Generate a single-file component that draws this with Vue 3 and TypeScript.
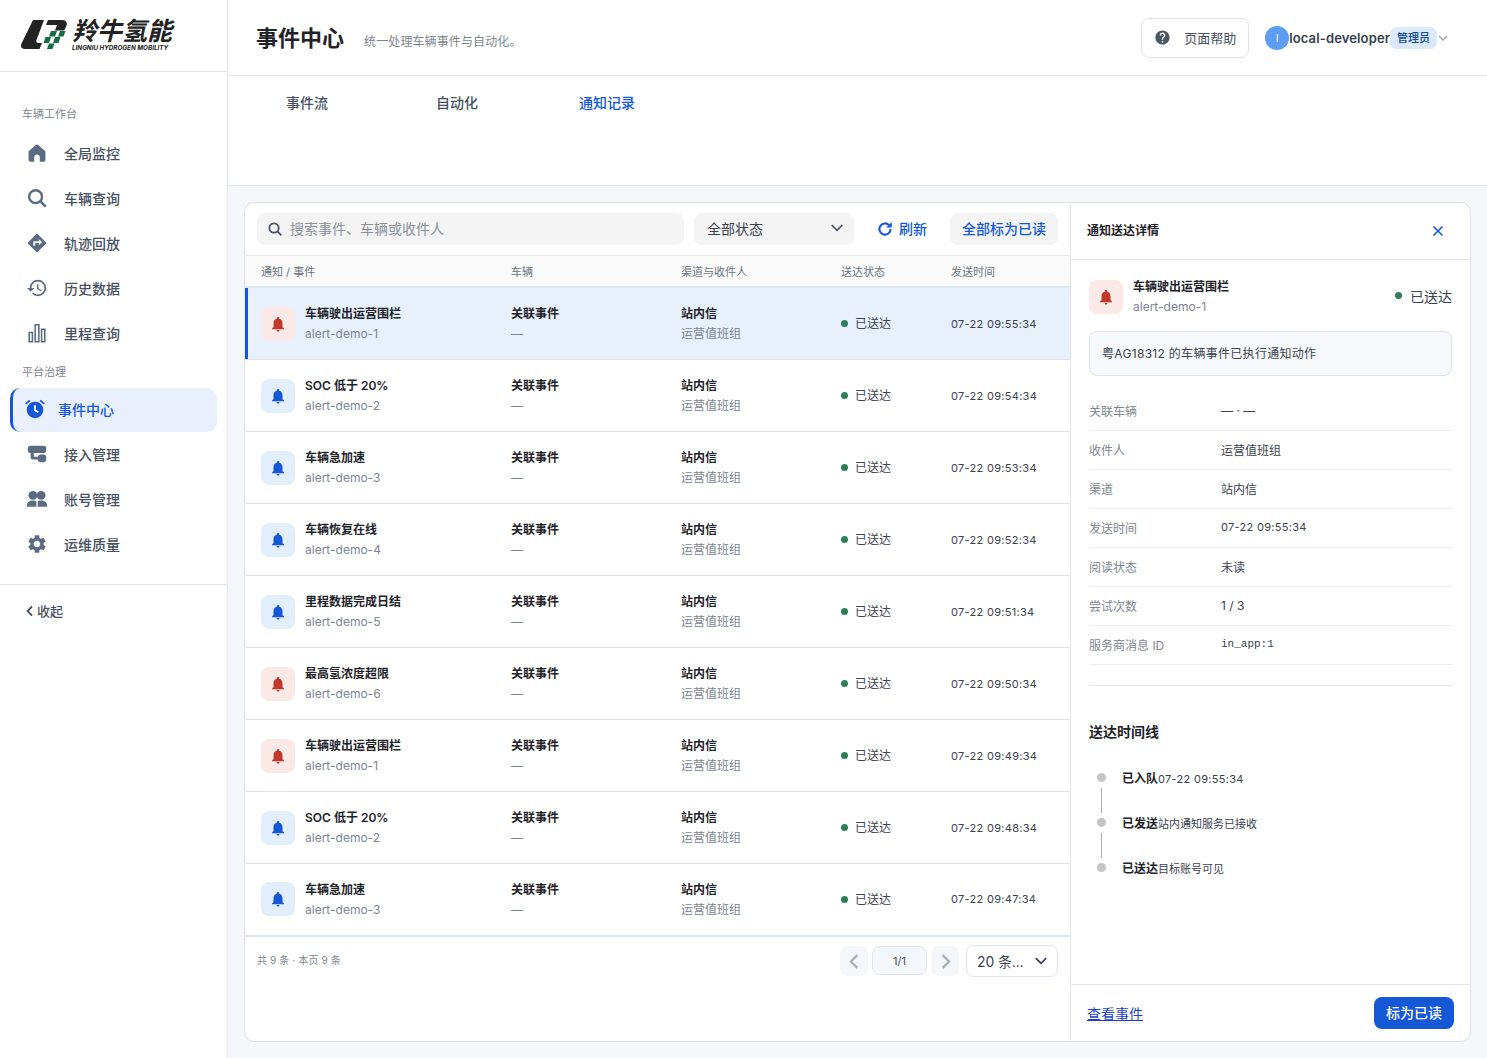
<template>
  <div class="app">
    <aside class="sidebar">
      <div class="logo">
        <svg class="logo-mark" viewBox="0 0 46 31">
          <path d="M12 1h11L15.500 21q-1 3 2 3H21l-2.500 6H4Q-1.500 30 .5 24.500Z" fill="#232323" />
          <path d="M27 1h14q6 0 4.500 5.500L44 10q-.5 1.500-2 1.500h-8l2-5.500h-11Z" fill="#232323" />
          <path d="M30 12h6l-2 5.500h-6ZM39 12h5.500l-2 5.500H37ZM24.500 18H30l-2 6h-5.500ZM34 18h5.500l-2 6H32ZM28 24.500h5.500L31.500 30H26Z" fill="#146c43" />
        </svg>
        <div class="logo-text">
          <div class="logo-cn">羚牛氢能</div>
          <div class="logo-en">LINGNIU HYDROGEN MOBILITY</div>
        </div>
      </div>
      <nav class="nav">
        <div class="nav-label">车辆工作台</div>
        <a v-for="item in workItems" :key="item.label" class="nav-item">
          <svg class="nav-icon" viewBox="0 0 24 24" v-html="item.icon"></svg>
          <span>{{ item.label }}</span>
        </a>
        <div class="nav-label second">平台治理</div>
        <a class="nav-item active">
          <svg class="nav-icon" viewBox="0 0 24 24">
            <path d="M2.500 7.200 7 3.400 5.700 1.900 1.200 5.700ZM22.800 5.700l-4.500-3.800L17 3.400l4.500 3.800Z" fill="#1558d6" />
            <circle cx="12" cy="13" r="9" fill="#1558d6" />
            <path d="M12 8v5.400l3.600 2.100" fill="none" stroke="#fff" stroke-width="2" />
          </svg>
          <span>事件中心</span>
        </a>
        <a v-for="item in adminItems" :key="item.label" class="nav-item">
          <svg class="nav-icon" viewBox="0 0 24 24" v-html="item.icon"></svg>
          <span>{{ item.label }}</span>
        </a>
      </nav>
      <div class="collapse">
        <svg viewBox="0 0 12 12" class="collapse-icon"><path d="M8 1.500 3.500 6 8 10.500" fill="none" stroke="currentColor" stroke-width="1.800" /></svg>
        <span>收起</span>
      </div>
    </aside>

    <div class="main">
      <header class="topbar">
        <h1>事件中心</h1>
        <p>统一处理车辆事件与自动化。</p>
        <button class="help">
          <svg viewBox="0 0 24 24" class="help-icon"><path d="M12 2C6.480 2 2 6.480 2 12s4.480 10 10 10 10-4.480 10-10S17.520 2 12 2zm1 17h-2v-2h2v2zm2.070-7.750-.9.920C13.450 12.900 13 13.500 13 15h-2v-.5c0-1.100.45-2.100 1.170-2.830l1.240-1.260c.37-.36.59-.86.59-1.410 0-1.100-.9-2-2-2s-2 .9-2 2H8c0-2.210 1.790-4 4-4s4 1.790 4 4c0 .88-.36 1.680-.93 2.250z" fill="#4b5563" /></svg>
          页面帮助
        </button>
        <div class="user">
          <span class="avatar">l</span>
          <span class="user-name">local-developer</span>
          <span class="role">管理员</span>
          <svg viewBox="0 0 12 12" class="user-chevron"><path d="M2 4l4 4 4-4" fill="none" stroke="#9aa3af" stroke-width="1.300" /></svg>
        </div>
      </header>

      <div class="tabs">
        <span v-for="tab in tabs" :key="tab" class="tab" :class="{ current: tab === '通知记录' }">{{ tab }}</span>
      </div>

      <main class="content">
        <section class="card">
          <div class="list">
            <div class="toolbar">
              <div class="search">
                <svg viewBox="0 0 24 24" class="search-icon"><circle cx="10.500" cy="10.500" r="7" fill="none" stroke="#4b5563" stroke-width="2.800" /><path d="m16 16 5.500 5.500" stroke="#4b5563" stroke-width="2.800" /></svg>
                <span>搜索事件、车辆或收件人</span>
              </div>
              <div class="status-select">
                <span>全部状态</span>
                <svg viewBox="0 0 12 12" class="chevron"><path d="M1.500 3.500 6 8l4.500-4.500" fill="none" stroke="#4b5563" stroke-width="1.500" /></svg>
              </div>
              <button class="refresh">
                <svg viewBox="0 0 24 24" class="refresh-icon"><path d="M19.500 12a7.500 7.500 0 1 1-2.200-5.300" fill="none" stroke="#1558d6" stroke-width="2.800" /><path d="M21 2.500v7.500h-7.500Z" fill="#1558d6" /></svg>
                刷新
              </button>
              <button class="read-all">全部标为已读</button>
            </div>

            <div class="row head">
              <span>通知 / 事件</span>
              <span>车辆</span>
              <span>渠道与收件人</span>
              <span>送达状态</span>
              <span>发送时间</span>
            </div>

            <div
              v-for="(row, i) in rows"
              :key="i"
              class="row body-row"
              :class="{ selected: i === 0 }"
            >
              <div class="event-cell">
                <span class="bell-box" :class="row.level">
                  <svg viewBox="0 0 24 24" class="bell"><path :d="bellPath" /></svg>
                </span>
                <div class="stack">
                  <strong>{{ row.title }}</strong>
                  <small>{{ row.id }}</small>
                </div>
              </div>
              <div class="stack">
                <strong>关联事件</strong>
                <small>—</small>
              </div>
              <div class="stack">
                <strong>站内信</strong>
                <small>运营值班组</small>
              </div>
              <div class="status"><i class="dot"></i>已送达</div>
              <div class="time">{{ row.time }}</div>
            </div>

            <div class="pager">
              <span class="total">共 9 条 · 本页 9 条</span>
              <div class="pager-right">
                <button class="page-btn">
                  <svg viewBox="0 0 12 12"><path d="M8 1.500 3.500 6 8 10.500" fill="none" stroke="#a3abb8" stroke-width="1.500" /></svg>
                </button>
                <span class="page-no">1/1</span>
                <button class="page-btn">
                  <svg viewBox="0 0 12 12"><path d="M4 1.500 8.500 6 4 10.500" fill="none" stroke="#a3abb8" stroke-width="1.500" /></svg>
                </button>
                <div class="size-select">
                  <span>20 条...</span>
                  <svg viewBox="0 0 12 12" class="chevron"><path d="M1.500 3.500 6 8l4.500-4.500" fill="none" stroke="#374151" stroke-width="1.500" /></svg>
                </div>
              </div>
            </div>
          </div>

          <aside class="detail">
            <div class="detail-head">
              <h2>通知送达详情</h2>
              <svg viewBox="0 0 12 12" class="close"><path d="M1.500 1.500l9 9m0-9-9 9" stroke="#1558d6" stroke-width="1.600" /></svg>
            </div>
            <div class="detail-body">
              <div class="summary">
                <span class="bell-box danger">
                  <svg viewBox="0 0 24 24" class="bell"><path :d="bellPath" /></svg>
                </span>
                <div class="stack">
                  <strong>车辆驶出运营围栏</strong>
                  <small>alert-demo-1</small>
                </div>
                <div class="summary-status"><i class="dot"></i>已送达</div>
              </div>
              <div class="message">粤AG18312 的车辆事件已执行通知动作</div>
              <dl class="facts">
                <div v-for="fact in facts" :key="fact.label" class="fact">
                  <dt>{{ fact.label }}</dt>
                  <dd :class="fact.cls">{{ fact.value }}</dd>
                </div>
              </dl>
              <h3>送达时间线</h3>
              <ul class="timeline">
                <li v-for="step in steps" :key="step.name">
                  <i></i>
                  <b>{{ step.name }}</b><span :class="{ num: step.num }">{{ step.note }}</span>
                </li>
              </ul>
            </div>
            <div class="detail-foot">
              <a class="view-link">查看事件</a>
              <button class="mark-read">标为已读</button>
            </div>
          </aside>
        </section>
      </main>
    </div>
  </div>
</template>

<script setup lang="ts">
const bellPath = 'M12 22c1.100 0 2-.9 2-2h-4c0 1.100.9 2 2 2zm6-6v-5c0-3.070-1.630-5.640-4.500-6.320V4c0-.83-.67-1.500-1.500-1.500s-1.500.67-1.500 1.500v.68C7.640 5.360 6 7.920 6 11v5l-2 2v1h16v-1l-2-2z'

const workItems = [
  {
    label: '全局监控',
    icon: '<path d="M10.700 3.200a2 2 0 0 1 2.600 0l7.200 6.300a2 2 0 0 1 .7 1.500V19.500a2 2 0 0 1-2 2H15v-5a3 3 0 0 0-6 0v5H4.800a2 2 0 0 1-2-2V11a2 2 0 0 1 .7-1.500Z"/>',
  },
  {
    label: '车辆查询',
    icon: '<circle cx="10.500" cy="10.500" r="7" fill="none" stroke="currentColor" stroke-width="2.600"/><path d="m16 16 5.500 5.500" stroke="currentColor" stroke-width="2.800"/>',
  },
  {
    label: '轨迹回放',
    icon: '<path d="M21.710 11.290l-9-9a.996.996 0 0 0-1.410 0l-9 9a.996.996 0 0 0 0 1.410l9 9c.39.39 1.020.39 1.410 0l9-9a.996.996 0 0 0 0-1.410zM14 14.500V12h-4v3H8v-4c0-.55.45-1 1-1h5V7.500l3.500 3.500-3.500 3.500z"/>',
  },
  {
    label: '历史数据',
    icon: '<path d="M13 3a9 9 0 0 0-9 9H1l3.890 3.890.07.14L9 12H6c0-3.870 3.130-7 7-7s7 3.130 7 7-3.130 7-7 7c-1.930 0-3.680-.79-4.940-2.060l-1.420 1.420A8.954 8.954 0 0 0 13 21a9 9 0 0 0 0-18zm-1 5v5l4.280 2.540.72-1.210-3.500-2.080V8H12z"/>',
  },
  {
    label: '里程查询',
    icon: '<path d="M3.500 11.500h3.500v10H3.500ZM10 3h4v18.500h-4ZM17 8h3.500v13.500H17Z" fill="none" stroke="currentColor" stroke-width="1.700"/>',
  },
]

const adminItems = [
  {
    label: '接入管理',
    icon: '<rect x="2" y="3" width="20" height="8" rx="2.500"/><path d="M5 10h3.500v5H15v3H7.500A2.500 2.500 0 0 1 5 15.500Z"/><rect x="13" y="12.500" width="9" height="8.500" rx="3"/>',
  },
  {
    label: '账号管理',
    icon: '<circle cx="7.500" cy="8" r="4.800"/><circle cx="16.500" cy="8" r="4.800"/><path d="M1 20.500v-2c0-3 3-5 6.500-5 1.500 0 2.800.4 3.800 1v6ZM12.700 20.500v-6c1-.6 2.300-1 3.800-1 3.500 0 6.500 2 6.500 5v2Z"/>',
  },
  {
    label: '运维质量',
    icon: '<path d="M19.140 12.940c.04-.3.06-.61.06-.94 0-.32-.02-.64-.07-.94l2.030-1.580a.49.49 0 0 0 .12-.61l-1.920-3.320a.488.488 0 0 0-.59-.22l-2.390.96c-.5-.38-1.030-.7-1.620-.94l-.36-2.540a.484.484 0 0 0-.48-.4h-3.840c-.24 0-.43.17-.47.41l-.36 2.540c-.59.24-1.130.57-1.620.94l-2.390-.96c-.22-.08-.47 0-.59.22L2.740 8.870c-.12.21-.08.47.12.61l2.030 1.580c-.05.3-.09.63-.09.94s.02.64.07.94l-2.030 1.580a.49.49 0 0 0-.12.61l1.920 3.320c.12.22.37.29.59.22l2.390-.96c.5.38 1.030.7 1.620.94l.36 2.540c.05.24.24.41.48.41h3.840c.24 0 .44-.17.47-.41l.36-2.540c.59-.24 1.130-.56 1.620-.94l2.390.96c.22.08.47 0 .59-.22l1.920-3.320c.12-.22.07-.47-.12-.61l-2.010-1.580zM12 15.600c-1.980 0-3.600-1.620-3.600-3.600s1.620-3.600 3.600-3.600 3.600 1.620 3.600 3.600-1.620 3.600-3.600 3.600z"/>',
  },
]

const tabs = ['事件流', '自动化', '通知记录']

const rows = [
  { title: '车辆驶出运营围栏', id: 'alert-demo-1', time: '07-22 09:55:34', level: 'danger' },
  { title: 'SOC 低于 20%', id: 'alert-demo-2', time: '07-22 09:54:34', level: 'info' },
  { title: '车辆急加速', id: 'alert-demo-3', time: '07-22 09:53:34', level: 'info' },
  { title: '车辆恢复在线', id: 'alert-demo-4', time: '07-22 09:52:34', level: 'info' },
  { title: '里程数据完成日结', id: 'alert-demo-5', time: '07-22 09:51:34', level: 'info' },
  { title: '最高氢浓度超限', id: 'alert-demo-6', time: '07-22 09:50:34', level: 'danger' },
  { title: '车辆驶出运营围栏', id: 'alert-demo-1', time: '07-22 09:49:34', level: 'danger' },
  { title: 'SOC 低于 20%', id: 'alert-demo-2', time: '07-22 09:48:34', level: 'info' },
  { title: '车辆急加速', id: 'alert-demo-3', time: '07-22 09:47:34', level: 'info' },
]

const facts = [
  { label: '关联车辆', value: '— · —', cls: '' },
  { label: '收件人', value: '运营值班组', cls: '' },
  { label: '渠道', value: '站内信', cls: '' },
  { label: '发送时间', value: '07-22 09:55:34', cls: 'num' },
  { label: '阅读状态', value: '未读', cls: '' },
  { label: '尝试次数', value: '1 / 3', cls: '' },
  { label: '服务商消息 ID', value: 'in_app:1', cls: 'mono' },
]

const steps = [
  { name: '已入队', note: '07-22 09:55:34', num: true },
  { name: '已发送', note: '站内通知服务已接收', num: false },
  { name: '已送达', note: '目标账号可见', num: false },
]
</script>

<style>
html,
body {
  background: #f5f7fb;
}
</style>

<style scoped>
.app {
  display: flex;
  height: 1058px;
  overflow: hidden;
  font-family: Inter, "Noto Sans CJK SC", sans-serif;
  color: #1f2329;
}

.sidebar {
  width: 228px;
  flex: none;
  box-sizing: border-box;
  background: #fff;
  border-right: 1px solid #e3e6ea;
}

.logo {
  height: 72px;
  box-sizing: border-box;
  border-bottom: 1px solid #e3e6ea;
  display: flex;
  align-items: center;
  padding: 0 0 2px 21px;
  gap: 5px;
}

.logo-mark {
  width: 46px;
  height: 31px;
}

.logo-cn {
  font-size: 25px;
  line-height: 26px;
  font-weight: 700;
  font-style: italic;
  color: #222;
  white-space: nowrap;
}

.logo-en {
  font-size: 6.300px;
  line-height: 8px;
  font-weight: 700;
  font-style: italic;
  color: #222;
  white-space: nowrap;
}

.nav {
  padding: 34px 10px 0;
  height: 513px;
  box-sizing: border-box;
  border-bottom: 1px solid #e3e6ea;
}

.nav-label {
  font-size: 11px;
  line-height: 16px;
  color: #7d8590;
  padding-left: 12px;
  margin-bottom: 8px;
}

.nav-label.second {
  margin: 0 0 8px;
  padding-top: 9px;
}

.nav-item {
  display: flex;
  align-items: center;
  height: 45px;
  padding-left: 16px;
  gap: 16px;
  font-size: 14px;
  font-weight: 500;
  color: #48505e;
}

.nav-icon {
  width: 22px;
  height: 22px;
  fill: #5d6b82;
  color: #5d6b82;
  flex: none;
}

.nav-item.active {
  height: 44px;
  margin-bottom: -1px;
  padding: 0 0 2px 11px;
  gap: 12px;
  color: #1558d6;
  background: #e9f0fb;
  border-left: 3px solid #1558d6;
  border-radius: 10px;
  box-sizing: border-box;
  width: 207px;
}

.collapse {
  display: flex;
  align-items: center;
  gap: 1px;
  padding: 17px 0 0 24px;
  font-size: 13px;
  font-weight: 500;
  color: #48505e;
  line-height: 18px;
}

.collapse-icon {
  width: 12px;
  height: 12px;
}

.main {
  flex: 1;
  min-width: 0;
  display: flex;
  flex-direction: column;
}

.topbar {
  height: 76px;
  box-sizing: border-box;
  background: #fff;
  border-bottom: 1px solid #e3e6ea;
  display: flex;
  align-items: center;
  padding: 0 38px 0 28px;
}

.topbar h1 {
  margin: 0 20px 4px 0;
  font-size: 22px;
  font-weight: 600;
  color: #1f2329;
}

.topbar p {
  margin: 6px 0 0;
  font-size: 12px;
  letter-spacing: .01em;
  color: #7d8590;
}

.help {
  margin-left: auto;
  width: 108px;
  height: 40px;
  box-sizing: border-box;
  display: flex;
  align-items: center;
  gap: 13px;
  padding: 0 12px;
  background: #fff;
  border: 1px solid #e0e3e7;
  border-radius: 8px;
  font: inherit;
  font-size: 13px;
  color: #48505e;
  white-space: nowrap;
}

.help-icon {
  width: 17px;
  height: 17px;
  flex: none;
}

.user {
  display: flex;
  align-items: center;
  margin-left: 16px;
}

.avatar {
  width: 24px;
  height: 24px;
  border-radius: 50%;
  background: #5b9ef4;
  color: #fff;
  font-size: 10px;
  display: flex;
  align-items: center;
  justify-content: center;
}

.user-name {
  font-size: 13px;
  font-weight: 600;
  letter-spacing: .01em;
  color: #36404f;
}

.role {
  width: 47px;
  height: 22px;
  box-sizing: border-box;
  text-align: center;
  line-height: 22px;
  font-size: 11px;
  font-weight: 500;
  color: #0f4a99;
  background: #dce9fb;
  border-radius: 7px;
}

.user-chevron {
  width: 12px;
  height: 12px;
}

.tabs {
  height: 110px;
  box-sizing: border-box;
  background: #fff;
  border-bottom: 1px solid #e3e6ea;
  padding: 17px 0 0 4px;
  display: flex;
  align-items: flex-start;
}

.tab {
  width: 150px;
  text-align: center;
  font-size: 14px;
  font-weight: 500;
  line-height: 20px;
  color: #48505e;
}

.tab.current {
  color: #1558d6;
}

.content {
  flex: 1;
  padding: 16px;
  min-height: 0;
  background: #f5f7fb;
}

.card {
  height: 100%;
  box-sizing: border-box;
  display: grid;
  grid-template-columns: 826px 1fr;
  background: #fff;
  border: 1px solid #dde2e9;
  border-radius: 10px;
  overflow: hidden;
}

.list {
  border-right: 1px solid #e3e6ea;
  display: flex;
  flex-direction: column;
}

.toolbar {
  height: 53px;
  flex: none;
  box-sizing: border-box;
  display: flex;
  align-items: center;
  padding: 0 12px;
  border-bottom: 1px solid #e6e8ec;
}

.search {
  width: 427px;
  height: 32px;
  box-sizing: border-box;
  background: #f4f4f5;
  border-radius: 8px;
  display: flex;
  align-items: center;
  gap: 7px;
  padding: 0 0 2px 10px;
  font-size: 14px;
  color: #8a8f98;
}

.search-icon {
  width: 16px;
  height: 16px;
  margin-top: 2px;
}

.status-select {
  width: 160px;
  height: 32px;
  margin-left: 10px;
  box-sizing: border-box;
  background: #f4f4f5;
  border-radius: 8px;
  display: flex;
  align-items: center;
  justify-content: space-between;
  padding: 0 10px 2px 13px;
  font-size: 14px;
  color: #3b424e;
}

.chevron {
  width: 14px;
  height: 14px;
}

.refresh {
  margin-left: 22px;
  border: 0;
  background: none;
  padding: 0 0 2px;
  display: flex;
  align-items: center;
  gap: 5px;
  font: inherit;
  font-size: 14px;
  font-weight: 500;
  color: #1558d6;
}

.refresh-icon {
  width: 18px;
  height: 18px;
  margin-top: 2px;
}

.read-all {
  margin-left: 23px;
  width: 108px;
  height: 32px;
  border: 0;
  border-radius: 8px;
  background: #f4f4f5;
  font: inherit;
  font-size: 14px;
  font-weight: 500;
  color: #1558d6;
  padding: 0 0 2px;
}

.row {
  display: grid;
  grid-template-columns: 250px 170px 160px 110px 1fr;
  padding: 0 0 0 16px;
  align-items: center;
  box-sizing: border-box;
}

.head {
  height: 32px;
  flex: none;
  background: #fafafa;
  border-bottom: 2px solid #e0e6ee;
  padding-bottom: 1px;
  font-size: 11px;
  color: #6b7280;
}

.body-row {
  height: 72px;
  flex: none;
  border-bottom: 1px solid #dfe3e8;
}

.body-row:nth-last-child(2) {
  height: 73px;
  padding-bottom: 1px;
  border-bottom: 2px solid #dfe6ee;
}

.body-row.selected {
  background: #e8f0fc;
  box-shadow: inset 3px 0 0 #1558d6;
}

.event-cell {
  display: flex;
  align-items: center;
  gap: 10px;
}

.bell-box {
  width: 34px;
  height: 34px;
  flex: none;
  border-radius: 8px;
  display: flex;
  align-items: center;
  justify-content: center;
}

.bell-box.danger {
  background: #fbe9e7;
  fill: #c0392b;
}

.bell-box.info {
  background: #e3eefd;
  fill: #1558d6;
}

.bell {
  width: 18px;
  height: 18px;
}

.stack {
  display: flex;
  flex-direction: column;
  gap: 3px;
  min-width: 0;
}

.stack strong {
  font-size: 12px;
  line-height: 17px;
  font-weight: 600;
  color: #1f2329;
}

.stack small {
  font-size: 12px;
  line-height: 17px;
  color: #7b8494;
}

.status {
  display: flex;
  align-items: center;
  gap: 7px;
  padding-bottom: 2px;
  font-size: 12px;
  color: #3b424e;
}

.status .dot {
  margin-top: 2px;
}

.dot {
  width: 7px;
  height: 7px;
  border-radius: 50%;
  background: #2e7d5b;
  flex: none;
}

.time {
  font-size: 11px;
  letter-spacing: .027em;
  color: #3b424e;
}

.pager {
  flex: 1;
  display: flex;
  justify-content: space-between;
  align-items: flex-start;
  padding: 8px 12px 0;
}

.total {
  font-size: 10px;
  line-height: 30px;
  letter-spacing: .012em;
  color: #7d8590;
}

.pager-right {
  display: flex;
  align-items: flex-start;
  gap: 4px;
}

.page-btn {
  width: 28px;
  height: 30px;
  margin-top: 1px;
  border: 0;
  padding: 0;
  border-radius: 8px;
  background: #f4f6fa;
  display: flex;
  align-items: center;
  justify-content: center;
}

.page-btn svg {
  width: 17px;
  height: 17px;
}

.page-no {
  width: 55px;
  height: 29px;
  margin-top: 1px;
  box-sizing: border-box;
  text-align: center;
  line-height: 29px;
  font-size: 11px;
  color: #48505e;
  background: #f4f7fb;
  border: 1px solid #dfe5ee;
  border-radius: 8px;
}

.size-select {
  width: 92px;
  height: 32px;
  margin-left: 3px;
  box-sizing: border-box;
  display: flex;
  align-items: center;
  justify-content: space-between;
  padding: 0 9px 0 10px;
  border: 1px solid #dfe5ee;
  border-radius: 8px;
  font-size: 14px;
  letter-spacing: -.01em;
  color: #3b424e;
}

.detail {
  display: flex;
  flex-direction: column;
  min-width: 0;
}

.detail-head {
  height: 57px;
  flex: none;
  box-sizing: border-box;
  border-bottom: 1px solid #e3e6ea;
  display: flex;
  align-items: center;
  justify-content: space-between;
  padding: 0 26px 0 16px;
}

.detail-head h2 {
  margin: 0 0 3px;
  font-size: 12px;
  font-weight: 600;
  color: #1f2329;
}

.close {
  width: 12px;
  height: 12px;
}

.detail-body {
  flex: 1;
  padding: 18px 18px 0;
  min-height: 0;
}

.summary {
  display: flex;
  align-items: center;
  gap: 10px;
}

.summary-status {
  margin-left: auto;
  display: flex;
  align-items: center;
  gap: 8px;
  padding-bottom: 2px;
  font-size: 14px;
  color: #3b424e;
}

.message {
  margin-top: 16px;
  height: 45px;
  box-sizing: border-box;
  padding: 0 12px;
  line-height: 43px;
  font-size: 12px;
  letter-spacing: .3px;
  color: #3b424e;
  background: #f6f8fb;
  border: 1px solid #e0e4ea;
  border-radius: 8px;
}

.facts {
  margin: 16px 0 0;
  padding-bottom: 20px;
  border-bottom: 1px solid #e3e6ea;
}

.fact {
  display: grid;
  grid-template-columns: 132px 1fr;
  align-items: center;
  height: 39px;
  padding-bottom: 2px;
  box-sizing: border-box;
  border-bottom: 1px solid #eceef1;
  font-size: 12px;
}

.fact dt {
  color: #7d8590;
}

.fact dd {
  margin: 0;
  color: #3b424e;
}

.fact dd.num {
  font-size: 11px;
  letter-spacing: .027em;
}

.fact dd.mono {
  font-family: "Liberation Mono", monospace;
  font-size: 11px;
}

.detail-body h3 {
  margin: 36px 0 0;
  font-size: 14px;
  line-height: 20px;
  font-weight: 600;
  color: #1f2329;
}

.timeline {
  list-style: none;
  margin: 28px 0 0;
  padding: 0;
}

.timeline li {
  position: relative;
  height: 45px;
  padding-left: 33px;
  font-size: 11px;
  line-height: 18px;
  color: #3b424e;
}

.timeline li i {
  position: absolute;
  left: 8px;
  top: 3px;
  width: 9px;
  height: 9px;
  border-radius: 50%;
  background: #c4c5c7;
}

.timeline li:not(:last-child)::after {
  content: "";
  position: absolute;
  left: 12px;
  top: 18px;
  height: 25px;
  border-left: 1px solid #a9adb3;
}

.timeline b {
  font-size: 12px;
  font-weight: 600;
  color: #1f2329;
}

.timeline .num {
  letter-spacing: .027em;
}

.detail-foot {
  height: 57px;
  flex: none;
  box-sizing: border-box;
  border-top: 1px solid #e3e6ea;
  display: flex;
  align-items: center;
  justify-content: space-between;
  padding: 0 16px;
}

.view-link {
  font-size: 14px;
  color: #1a3fcf;
  text-decoration: underline;
}

.mark-read {
  width: 80px;
  height: 32px;
  border: 0;
  border-radius: 8px;
  background: #1558d6;
  color: #fff;
  font: inherit;
  font-size: 14px;
  font-weight: 500;
  padding: 0 0 2px;
}
</style>
